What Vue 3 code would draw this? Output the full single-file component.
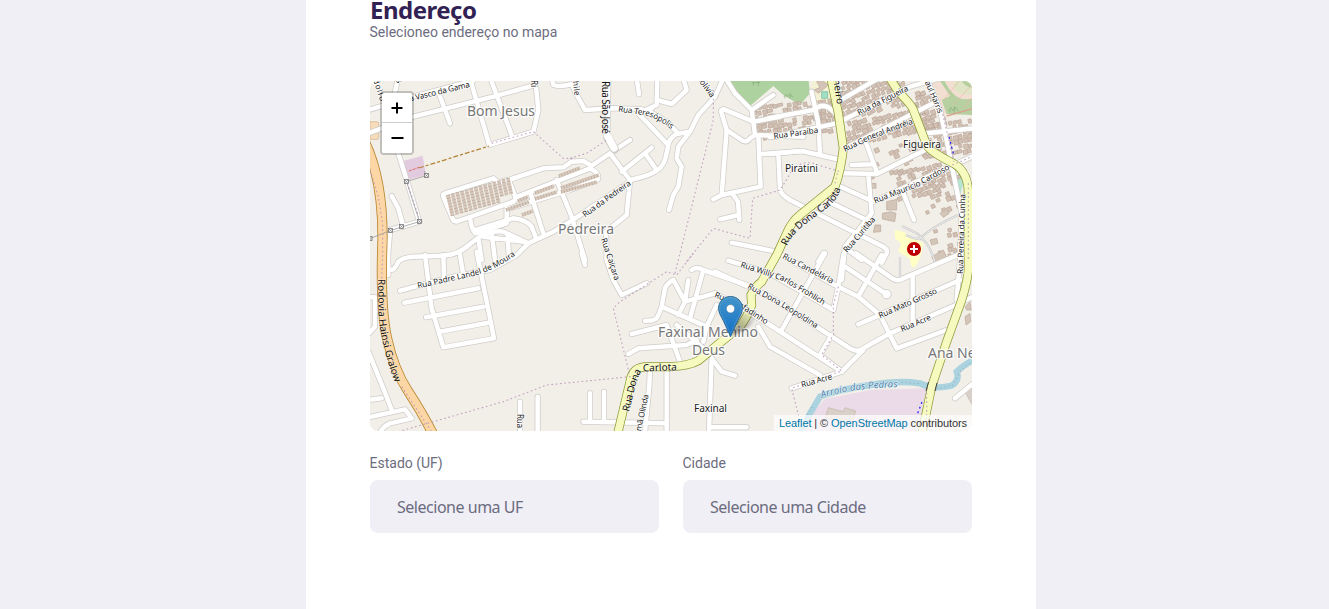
<script setup>
// Road geometry is stored per map sector; one sector unit is a third of a pixel.
const sectors = {
  a: [370, 80], b: [570, 80], c: [770, 80],
  d: [370, 255], e: [570, 255], f: [770, 255]
}
const place = s => `translate(${sectors[s][0]} ${sectors[s][1]}) scale(.33333)`

const roads = [
  ['a', 'M-5 90L130 50L310 2M-5 160L130 110L370 50L495 15M205 35L240 130M300 -5L358 195L490 155L505 90L497 10M365 5L425 165'],
  ['a', 'M84 -5L70 60L85 220L110 300L148 425L60 450M65 348L85 385L100 440M545 -5L550 15Q570 22 606 12L615 35L645 90L730 85'],
  ['a', 'M220 350Q218 342 225 340L370 295L385 307L416 300L437 352Q437 360 430 365L265 423Q252 427 248 417ZM416 300L520 265L580 262L605 245L640 243L665 257L735 210L780 180'],
  ['a', 'M437 352L660 265Q690 280 683 298L600 330L410 388M480 335L520 460M560 300L605 410L645 540M300 415L305 440L316 460L410 430L410 385M310 452L430 415Q470 420 485 440L498 475'],
  ['a', 'M55 585L54 525L60 455M60 568Q72 575 85 545Q95 533 130 530L220 527Q265 525 300 492L340 462Q380 450 400 455L475 490L550 455L605 422L780 305M475 490L440 525L360 570L250 590L90 632M325 475L335 540M365 460L375 540M412 462L417 530M340 470L460 485'],
  ['d', 'M165 0L185 160L220 277L372 250L320 -10M220 0L222 70M270 0L280 60M103 143L325 100M168 187L340 155M210 230L355 203'],
  ['d', 'M-5 290L40 400L65 465M-5 435L35 430M-5 487L105 463L125 490L60 505Q35 515 28 540M-5 127L15 127L15 215L-5 237M450 440L450 535M503 425L503 535'],
  ['b', 'M115 -5L112 170L135 210M200 -5L207 43M262 -5L260 75L205 100L290 190M130 85L215 88Q275 105 320 155M340 -5L350 30L305 72L262 60M205 100L245 85'],
  ['b', 'M460 -5L435 50L385 105L360 155L320 162Q295 175 293 205L285 240Q275 265 255 275Q235 288 180 300M360 155L325 200L320 235L335 260L325 320L310 345L297 390'],
  ['b', 'M120 220L180 300L170 405L108 455L110 540L130 600L155 645L230 610M155 275L245 203M225 220L260 270'],
  ['b', 'M467 -5L495 40L545 90L555 165M545 90L610 45M630 110L550 125L462 88Q450 88 455 100L470 150L455 345M470 150L515 180Q530 190 540 175L555 165L700 170M565 170L572 320L455 345L430 358M572 222L700 213M490 345L504 365L508 420M505 405L450 418M485 488L630 517'],
  ['c', 'M-5 115L130 90Q160 65 185 90L205 110M0 172L200 130L420 20L500 -3M125 35L145 130L150 220M0 222L95 213L200 237M25 220L30 330Q35 345 60 360L340 500Q355 510 350 520L335 548'],
  ['c', 'M225 205L490 70M285 180L320 275M220 280L320 282L465 210M295 285L305 400L225 500L215 600M245 255L305 253M200 315L300 360M165 360L290 420M195 70L325 -5M400 340L432 420M310 365L540 260L610 228M470 160L610 145M235 510L275 540'],
  ['c', 'M470 -5L510 90L530 180L550 280L575 400L570 540L560 660M160 520L145 545'],
  ['e', 'M35 -5L45 30M225 197Q260 200 265 180L275 155L285 100Q290 85 310 75L345 140L355 75M275 155L410 215M325 180L345 140L435 115M365 45Q380 33 400 45L530 90M400 45L360 190M440 150L410 215L400 260M185 237L290 210L330 320M175 297L205 280L350 270L380 255M320 210L400 280'],
  ['e', 'M425 310L455 350L495 362M425 310L417 530M420 517L530 517M240 345L238 390L225 530M290 350L290 530M40 500L290 505M60 415L60 500M102 410L102 500'],
  ['f', 'M35 0L190 88L265 125L330 180L380 280L530 225M-125 17L0 55L190 165L205 95L220 0M-165 50L0 125L240 280Q265 295 280 280L360 235L565 147M-165 115L0 210L215 350L280 285'],
  ['f', 'M-35 215L0 275L150 360M65 400L215 350M165 -5L35 225M225 35L350 118M258 -5L370 72Q385 80 400 70L575 -5M335 0L265 125M428 60L428 200M265 208L570 75M185 240L150 300L215 350M555 430L610 385M560 147L610 125']
]

const mainRoads = [
  ['e', 'M142 540L180 380Q187 335 230 335L300 335Q355 333 385 317L460 255L510 215Q535 180 545 150L543 120Q555 95 575 80L620 0L650 -65Q665 -100 690 -120L795 -205Q812 -250 820 -320L805 -425L783 -530'],
  ['c', 'M360 -5L385 35Q425 75 430 90L470 195Q480 215 550 250Q595 275 595 340L595 540Q600 580 575 660L530 785L485 920L455 1065']
]

const borders = [
  ['d', 'M85 530L400 440L530 390L780 365L730 160L750 140L890 50L920 60L970 -5'],
  ['b', 'M430 30L430 120L325 540L315 580M350 545L430 445L540 475L548 355L630 330L655 290Q680 240 730 250L810 275M0 235L50 220L110 180'],
  ['a', 'M490 155L580 235L610 235M0 270L25 350L38 430L38 525L35 600'],
  ['a', 'M112 310L146 410M365 190L490 155'],
  ['f', 'M205 95L190 150L190 240L155 300L215 348L65 400L90 500M470 400L470 530'],
  ['d', 'M95 395L185 530'],
  ['c', 'M202 280L195 310M595 310L595 540M515 90L552 245M535 260L606 230']
]

// Blocks of houses: [x, y, width, height, rotation, density]
const blocks = [
  [752, 106, 78, 32, -12, 0.8], [840, 82, 62, 38, -28, 0.92], [846, 122, 78, 22, -23, 0.9],
  [914, 92, 30, 40, -20, 0.88], [922, 124, 47, 34, -15, 0.85], [868, 150, 60, 26, -24, 0.3],
  [896, 172, 54, 28, -24, 0.66], [816, 104, 20, 20, -12, 0.85], [925, 176, 32, 40, -24, 0.25],
  [932, 230, 26, 28, -15, 0.25], [748, 136, 22, -16, -12, 0.8]
]
const noise = n => { const v = Math.sin(n * 127.1 + 11.7) * 43758.5453; return v - Math.floor(v) }
const houses = blocks.flatMap(([x, y, w, h, r, density], k) => {
  const out = []
  const a = r * Math.PI / 180
  for (let i = 0; i < w / 5; i++) for (let j = 0; j < h / 5; j++) {
    const n = k * 911 + i * 37 + j * 5.3
    if (noise(n) > density) continue
    const px = x + i * 5 + noise(n + 1) * 1.4
    const py = y + j * 5 + i * 5 * Math.tan(a) * .45 + noise(n + 2) * 1.4
    const park = (px > 932 && py < 118) || (px < 812 && py < 84 + Math.abs(px - 772) * .55)
    if (!park) out.push({ x: px, y: py, w: 3 + noise(n + 3) * 2.2, h: 2.8 + noise(n + 4) * 2, r })
  }
  return out
})
const sheds = Array.from({ length: 14 }, (_, i) => ({ x: 448 + i * 4.6, y: 195 - i * 1.3, h: i > 10 ? 16 : 21 }))

const labels = [
  { t: 'a Vasco da Gama', p: 'M410 101.5L474 86', w: 62 },
  { t: 'dolfo M', p: 'M373 80L385 115', w: 34 },
  { t: 's', p: 'M396 80L399 88', w: 4 },
  { t: 'Ri', p: 'M531 80L531 92', w: 7 },
  { t: 'Chile', p: 'M572 76L575 99', w: 20 },
  { t: 'Rua Teresópolis', p: 'M618 111.5L643 115Q659 118 674 132', w: 57 },
  { t: 'Bolívia', p: 'M696 78L715 103', w: 25 },
  { t: 'Rua da Pedreira', p: 'M585 217.5L635 182', w: 57 },
  { t: 'Rua Padre Landel de Moura', p: 'M418 288.5L465 278Q495 272 521 251', w: 104 },
  { t: 'Rua Caiçara', p: 'M601 239L616 285', w: 44 },
  { t: 'Rua Paraíba', p: 'M774 139L823 132', w: 45 },
  { t: 'Rua da Figueira', p: 'M859 115.5L913 88', w: 56 },
  { t: 'Rua General Andréia', p: 'M845 152L872 139L920 121', w: 74 },
  { t: 'Rua Maurício Cardoso', p: 'M875 203.5L920 186L955 166', w: 83 },
  { t: 'Rua Curitiba', p: 'M847 253L878 217', w: 44 },
  { t: 'Paul Harris', p: 'M923 78L940 118', w: 39 },
  { t: 'Rua Pereira da Cunha', p: 'M963 274L965.5 190', w: 80 },
  { t: 'Rua Candelária', p: 'M782 258L836 286', w: 56 },
  { t: 'Rua Willy Carlos Frohlich', p: 'M740 267L783 281L828 308', w: 92 },
  { t: 'Rua Dona Leopoldina', p: 'M747 288L782 307L820 331', w: 80 },
  { t: 'Rua Panfadinho', p: 'M714 297L739 307L770 327', w: 59 },
  { t: 'Rua Mato Grosso', p: 'M880 318.5L942 291', w: 63 },
  { t: 'Rua Acre', p: 'M902 332L935 318', w: 32 },
  { t: 'Rua Acre', p: 'M802 387.5L836 378', w: 32 },
  { t: 'Irmã Olinda', p: 'M640 437L650 388', w: 43 },
  { t: 'Rua', p: 'M517 414L517 432', w: 14 }
]
const mainLabels = [
  { t: 'Rodovia Hainsi Gralow', p: 'M378 279L378.5 317Q382 350 397 388', w: 106 },
  { t: 'Rua São José', p: 'M602 81L602 137', w: 53 },
  { t: 'Rua Dona Carlota', p: 'M787 246Q791 235 807 223L827 208Q839 200 845 176', w: 80 },
  { t: 'Pinheiro', p: 'M831 64L838 111', w: 41 },
  { t: 'Rua Dona', p: 'M629 412L635 388Q637 377 645 366', w: 43 },
  { t: 'Carlota', p: 'M643 371.5L682 370', w: 34 }
]
const places = [
  { t: 'Bom Jesus', x: 467, y: 116, w: 68, k: 'suburb' },
  { t: 'Pedreira', x: 558, y: 233.5, w: 56, k: 'suburb' },
  { t: 'Faxinal Menino', x: 658, y: 336.5, w: 100, k: 'suburb' },
  { t: 'Deus', x: 692, y: 355, w: 33, k: 'suburb' },
  { t: 'Ana Neri', x: 928, y: 357.5, w: 57, k: 'suburb' },
  { t: 'Piratini', x: 785, y: 172, w: 33, k: 'hamlet' },
  { t: 'Figueira', x: 903, y: 148, w: 38, k: 'hamlet' },
  { t: 'Faxinal', x: 694, y: 412, w: 33, k: 'hamlet' }
]
const barriers = [[406.5, 181.5], [426.5, 175.5], [419.5, 221.5], [401.5, 226.5], [390.5, 230.5], [370, 238.5]]
const selects = [
  { label: 'Estado (UF)', value: 'Selecione uma UF' },
  { label: 'Cidade', value: 'Selecione uma Cidade' }
]
</script>

<template>
  <main class="page">
    <form class="form">
      <header class="legend">
        <h2>Endereço</h2>
        <span>Selecioneo endereço no mapa</span>
      </header>

      <div class="map">
        <svg class="tiles" viewBox="370 81 602 350" width="602" height="350">
          <rect x="370" y="81" width="602" height="350" fill="#f2efe9" />
          <g :transform="place('c')">
            <path d="M-130 -5L-62 80L10 18L40 45L90 75L120 40L115 -5Z" fill="#aed1a0" />
            <path d="M470 -5L510 75L525 105L610 85L610 -5Z" fill="#f3dfd2" />
            <path d="M520 -5Q535 30 560 50Q580 62 610 55V105L530 102L515 60L540 48L505 -5Z" fill="#b6d0a2" />
            <path d="M560 -5Q540 20 565 40Q590 48 610 40V-5Z" fill="#dfe5c5" />
            <path d="M575 -5Q575 18 610 25V-5Z" fill="#b6d0a2" />
            <path d="M530 108L610 85" fill="none" stroke="#d9a58c" stroke-width="4" />
            <path d="M520 60L570 0M548 75L610 10M580 85L610 50" fill="none" stroke="#edb6a4" stroke-width="2" />
            <path d="M120 35L128 -5L180 -5L193 75L170 70L140 80Z" fill="#f4f1d4" />
            <path d="M133 30L150 22L140 5L155 0L175 15L160 28L145 40Z" fill="#d4c4b8" stroke="#b9a595" stroke-width="2" />
            <path d="M155 35H173V55H155Z" fill="#a4dfc5" stroke="#65b99e" stroke-width="2" />
            <path d="M375 450L400 455L415 465L440 478L460 490L452 530L435 562L425 560L418 535L385 515L393 490L375 475Z" fill="#ffffc5" />
            <path d="M565 275L580 310L570 345L560 310Z" fill="#b5e3ce" />
            <path d="M45 48V55M60 45V55M42 50L47 43L52 50L60 40L68 52M540 90V98M553 83V98M535 92L542 82L548 92L555 80L565 94" fill="none" stroke="#85aa77" stroke-width="2" />
            <path d="M-55 8H-30M-50 8V18M-35 3V18" fill="none" stroke="#85aa77" stroke-width="2" />
          </g>
          <g :transform="place('a')">
            <path d="M102 242L158 227L168 285L110 300Z" fill="#e2cbde" />
            <path d="M0 125H20Q26 125 26 130V173Q26 178 20 178H0Z" fill="#f5dcba" stroke="#d1ac8d" stroke-width="2" />
          </g>
          <g :transform="place('f')">
            <path d="M100 540L120 480L165 432L300 405L470 400L440 540Z" fill="#ebdbe8" />
            <path d="M175 458L220 470L225 458L257 468L246 502L165 490ZM585 410L610 395V455L590 420Z" fill="#d9d0c9" stroke="#c4b3a5" stroke-width="2" />
            <path d="M90 535Q115 480 150 425Q200 405 300 390Q390 375 450 385Q490 405 545 392Q570 375 560 350Q580 330 610 315" fill="none" stroke="#aad3df" stroke-width="19" />
            <path d="M100 500L130 450M395 382L450 386M500 402L550 390L570 350L610 315" fill="none" stroke="#8ba5ba" stroke-width="3" stroke-dasharray="3 9" />
          </g>

          <g fill="#d2c2b6" stroke="#b8a293" stroke-width=".6">
            <rect v-for="(h, i) in houses" :key="i" :x="h.x" :y="h.y" :width="h.w" :height="h.h" :transform="`rotate(${h.r} ${h.x} ${h.y})`" />
          </g>
          <g :transform="place('c')" fill="#d4c5b9" stroke="#bda99a" stroke-width="2">
            <path d="M350 365L380 358L380 390L350 390ZM337 400L362 395L378 400L374 425L337 417ZM315 435L332 435V455L310 457ZM305 310H318V325H305ZM510 400L530 385L538 400L520 412ZM480 480L500 475L504 490L485 495ZM505 513L518 513V526H505ZM588 480H602V495H588Z" />
            <path d="M485 530L520 510L535 542L500 560ZM585 680L600 665L604 690L590 690ZM585 710L600 700L602 725L588 735Z" />
          </g>
          <path d="M902 226L916 233Q921 236 921 238Q930 228 958 215M906 235Q915 240 920 238Q928 240 935 262M900 257V278" fill="none" stroke="#c8c8c8" stroke-width="2.2" />
          <path d="M902 226L916 233Q921 236 921 238Q930 228 958 215M906 235Q915 240 920 238Q928 240 935 262M900 257V278" fill="none" stroke="#ededed" stroke-width="1" />

          <g class="road casing"><path v-for="([s, d], i) in roads" :key="i" :d="d" :transform="place(s)" /></g>
          <circle cx="886.6" cy="294.3" r="4.6" fill="#fff" stroke="#cfcdca" />
          <g class="road fill"><path v-for="([s, d], i) in roads" :key="i" :d="d" :transform="place(s)" /></g>
          <circle cx="886.6" cy="294.3" r="3.7" fill="#fff" />
          <path d="M607.5 137L614.5 149" stroke="#cfcdca" stroke-width="9" stroke-linecap="round" />
          <path d="M607.5 136L614 148" stroke="#fff" stroke-width="7.4" stroke-linecap="round" />
          <g stroke="#d8c9bd" stroke-width="3.7">
            <path v-for="(s, i) in sheds" :key="i" :d="`M${s.x} ${s.y}l${s.h * .22} ${s.h}`" />
            <path d="M506 210L529 202M535 199L557 192M561 188L599 175M561 192L597 182M518 201L528 197M535 193L554 186M559 176L580 168M522 215L533 211" />
          </g>
          <g stroke="#b09c90" stroke-width="3.5" stroke-dasharray=".7 2.2" opacity=".7">
            <path v-for="(s, i) in sheds" :key="i" :d="`M${s.x} ${s.y}l${s.h * .22} ${s.h}`" />
            <path d="M506 210L529 202M535 199L557 192M561 188L599 175M561 192L597 182M518 201L528 197M535 193L554 186M559 176L580 168M522 215L533 211" />
          </g>

          <g fill="none">
            <path d="M365 142Q383 180 382.5 240Q380 307 387 338Q394 370 408 391Q423 414 434 436" stroke="#b78730" stroke-width="10.2" />
            <path d="M365 142Q383 180 382.5 240Q380 307 387 338Q394 370 408 391Q423 414 434 436" stroke="#fcd6a4" stroke-width="8.5" />
            <path v-for="([s, d], i) in mainRoads" :key="'c' + i" :d="d" :transform="place(s)" stroke="#8d9a38" stroke-width="27" />
            <path v-for="([s, d], i) in mainRoads" :key="'f' + i" :d="d" :transform="place(s)" stroke="#f7fabf" stroke-width="22.5" />
            <path v-for="([s, d], i) in borders" :key="'b' + i" :d="d" :transform="place(s)" stroke="#b894bb" stroke-width="3.3" stroke-dasharray="5 8" opacity=".85" />
            <path d="M409 171L420 167" stroke="#e66e65" stroke-dasharray="3 1" />
            <path d="M419 168L489 146" stroke="#b48536" stroke-width="1.3" stroke-dasharray="5 2 3 2" />
            <path d="M949 137L954 156M922 402L917 415" stroke="#2020ff" stroke-width="1.2" stroke-dasharray="2 3" />
            <path d="M928.5 382L926 391M937 383L935 391" stroke="#444" />
            <path d="M406.5 181.5L426.5 175.5L424 171M406.5 181.5L419.5 221.5L390.5 230.5L370 238.5" stroke="#999" stroke-width=".8" />
          </g>
          <g v-for="([x, y], i) in barriers" :key="'p' + i" :transform="`translate(${x} ${y})`" stroke="#777" stroke-width=".8">
            <rect x="-2" y="-2" width="4" height="4" fill="#eee" /><path d="M-1.5 -1.5L1.5 1.5M1.5 -1.5L-1.5 1.5" stroke-width=".5" />
          </g>
          <circle cx="914" cy="249" r="7" fill="#bf0000" />
          <path d="M914 245V253M910 249H918" stroke="#fff" stroke-width="2" />

          <defs>
            <path v-for="(l, i) in labels" :id="'street' + i" :key="i" :d="l.p" />
            <path v-for="(l, i) in mainLabels" :id="'avenue' + i" :key="i" :d="l.p" />
            <path id="stream" d="M822 398Q850 388 902 387" />
          </defs>
          <g class="street">
            <text v-for="(l, i) in labels" :key="i" :textLength="l.w"><textPath :href="'#street' + i" :textLength="l.w">{{ l.t }}</textPath></text>
          </g>
          <g class="avenue">
            <text v-for="(l, i) in mainLabels" :key="i" :textLength="l.w"><textPath :href="'#avenue' + i" :textLength="l.w">{{ l.t }}</textPath></text>
          </g>
          <text class="stream" textLength="77"><textPath href="#stream" textLength="77">Arroio das Pedras</textPath></text>
          <text v-for="p in places" :key="p.t" :class="p.k" :x="p.x" :y="p.y" :textLength="p.w">{{ p.t }}</text>
        </svg>

        <div class="zoom">
          <button type="button" aria-label="Zoom in"><svg viewBox="0 0 30 30"><path d="M14.5 9V20M9 14.5H20" /></svg></button>
          <button type="button" aria-label="Zoom out"><svg viewBox="0 0 30 30"><path d="M9.5 15H21.5" /></svg></button>
        </div>

        <svg class="marker" viewBox="0 0 50 43" width="50" height="43">
          <defs>
            <linearGradient id="pin" x1="0" y1="0" x2="0" y2="1"><stop stop-color="#4395ca" /><stop offset="1" stop-color="#126fc6" /></linearGradient>
            <linearGradient id="shade" x1="0" y1="1" x2="1" y2="0"><stop stop-color="#000" stop-opacity=".5" /><stop offset="1" stop-color="#000" stop-opacity="0" /></linearGradient>
            <filter id="soft"><feGaussianBlur stdDeviation="1.4" /></filter>
          </defs>
          <path d="M13 40L19 25Q27 13 36 17Q40 23 31 31Z" fill="url(#shade)" filter="url(#soft)" />
          <path d="M12.5 .5C5.5 .5 .6 5.7 .6 12.4C.6 17 3 20 5.2 24.5L12.5 40.5L19.8 24.5C22 20 24.4 17 24.4 12.4C24.4 5.7 19.5 .5 12.5 .5Z" fill="url(#pin)" stroke="#2e6c97" />
          <path d="M12.5 1.6C6.2 1.6 1.7 6.3 1.7 12.4C1.7 16.5 4 19.5 6.2 24L12.5 37.7L18.8 24C21 19.5 23.3 16.5 23.3 12.4C23.3 6.3 18.8 1.6 12.5 1.6Z" fill="none" stroke="#fff" stroke-opacity=".13" />
          <circle cx="12.5" cy="12.7" r="4.2" fill="#fff" stroke="#2e6c97" stroke-width=".5" />
        </svg>

        <div class="credit"><a>Leaflet</a> | © <a>OpenStreetMap</a> contributors</div>
      </div>

      <div class="fields">
        <label v-for="s in selects" :key="s.label" class="field">
          <span class="name">{{ s.label }}</span>
          <span class="select">{{ s.value }}</span>
        </label>
      </div>
    </form>
  </main>
</template>

<style>
body { background: #f0eff5; overflow: hidden; }
</style>

<style scoped>
.page { height: 609px; display: flex; justify-content: center; background: #f0eff5; font-family: Roboto, sans-serif; color: #6c6c80; overflow: hidden; padding-left: 13px; box-sizing: border-box; }
.form { box-sizing: border-box; width: 730px; height: 609px; padding: 0 64px; background: #fff; }
.legend { height: 81px; box-sizing: border-box; }
.legend h2 { margin: 0; height: 24px; font: 700 24px/20px "Noto Sans", sans-serif; letter-spacing: -.5px; color: #322153; }
.legend span, .name { margin-left: -.5px; font-size: 14px; line-height: 17px; white-space: nowrap; }
.legend span { display: block; }
.map { position: relative; width: 602px; height: 350px; overflow: hidden; border-radius: 8px; }
.tiles { display: block; }
.road { fill: none; stroke-linejoin: round; stroke-linecap: round; }
.casing { stroke: #cfcdca; stroke-width: 18px; }
.fill { stroke: #fff; stroke-width: 13.5px; }
text { font-family: "Noto Sans", sans-serif; paint-order: stroke; stroke-linejoin: round; }
.street { font-size: 8.2px; fill: #222; stroke: #fff; stroke-width: 1.4px; }
.avenue { font-size: 10px; fill: #111; stroke: rgba(255, 255, 255, .5); stroke-width: .8px; }
.stream { font-size: 9.6px; font-style: italic; fill: #4c81ac; stroke: #e8f4f6; stroke-width: 1px; }
.suburb { font-size: 14px; fill: #777; stroke: rgba(255, 255, 255, .8); stroke-width: 2.6px; }
.hamlet { font-size: 10.2px; fill: #222; stroke: rgba(255, 255, 255, .75); stroke-width: 2px; }
.zoom { position: absolute; left: 10px; top: 10px; width: 30px; border: 2px solid rgba(0, 0, 0, .2); border-radius: 4px; background-clip: padding-box; }
.zoom button { display: block; width: 30px; height: 30px; padding: 0; border: 0; background: #fff; border-radius: 0 0 2px 2px; overflow: hidden; }
.zoom button:first-child { border-bottom: 1px solid #ccc; border-radius: 2px 2px 0 0; }
.zoom svg { display: block; width: 30px; height: 30px; }
.zoom path { stroke: #000; stroke-width: 2; fill: none; }
.zoom button:first-child path { transform: translate(.5px, .5px); }
.marker { position: absolute; left: 348px; top: 215px; }
.credit { position: absolute; right: 0; bottom: 0; width: 188px; height: 16px; padding: 0 5px; font: 11px/16px "Liberation Sans", Arial, sans-serif; letter-spacing: -.09px; color: #333; white-space: nowrap; background: rgba(255, 255, 255, .7); }
.credit a { color: #0078a8; }
.fields { display: grid; grid-template-columns: 289px 289px; gap: 24px; margin-top: 24px; }
.field { display: flex; flex-direction: column; gap: 8px; }
.select { display: flex; align-items: center; height: 53px; padding: 0 27px; border-radius: 8px; background: #f0eff5; font: 16px/24px "Noto Sans", sans-serif; letter-spacing: -.48px; }
</style>
